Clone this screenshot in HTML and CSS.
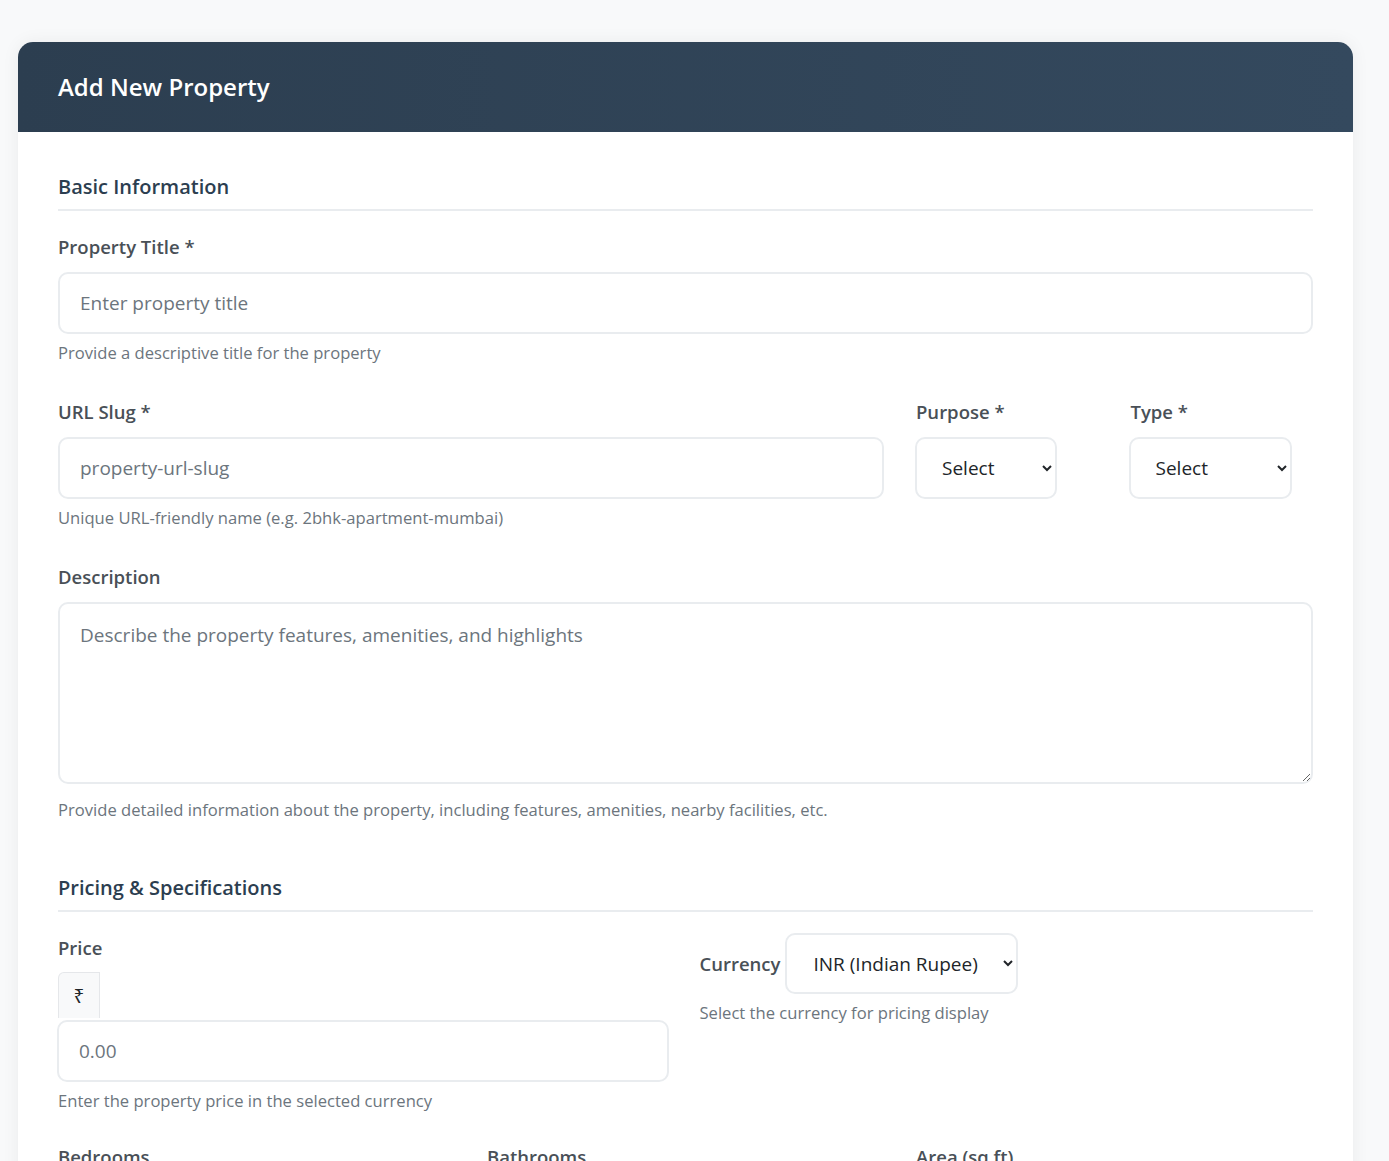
FILE: index.html
```html
<!DOCTYPE html>
<html lang="en">
<head>
<meta charset="utf-8">
<title>Add New Property</title>
<link rel="stylesheet" href="styles.css">
</head>
<body>
<div class="card">
  <div class="card-header">
    <h1 class="card-title">Add New Property</h1>
  </div>
  <form class="card-body">
    <section class="form-section">
      <h2 class="section-title">Basic Information</h2>
      <div class="field">
        <label class="form-label">Property Title *</label>
        <input class="form-control" type="text" placeholder="Enter property title">
        <div class="form-text">Provide a descriptive title for the property</div>
      </div>
      <div class="row row-slug">
        <div class="field">
          <label class="form-label">URL Slug *</label>
          <input class="form-control" type="text" placeholder="property-url-slug">
          <div class="form-text">Unique URL-friendly name (e.g. 2bhk-apartment-mumbai)</div>
        </div>
        <div class="field">
          <label class="form-label">Purpose *</label>
          <select class="form-select select-purpose"><option>Select</option></select>
        </div>
        <div class="field">
          <label class="form-label">Type *</label>
          <select class="form-select select-type"><option>Select</option></select>
        </div>
      </div>
      <div class="field">
        <label class="form-label">Description</label>
        <textarea class="form-control textarea" placeholder="Describe the property features, amenities, and highlights"></textarea>
        <div class="form-text form-text-wide">Provide detailed information about the property, including features, amenities, nearby facilities, etc.</div>
      </div>
    </section>

    <section class="form-section">
      <h2 class="section-title">Pricing &amp; Specifications</h2>
      <div class="row row-half">
        <div class="field">
          <label class="form-label">Price</label>
          <span class="input-group-text">₹</span>
          <input class="form-control price-input" type="text" placeholder="0.00">
          <div class="form-text">Enter the property price in the selected currency</div>
        </div>
        <div class="field field-currency">
          <div class="currency-line">
            <label class="form-label inline">Currency</label>
            <select class="form-select select-currency"><option>INR (Indian Rupee)</option></select>
          </div>
          <div class="form-text">Select the currency for pricing display</div>
        </div>
      </div>
      <div class="row row-third">
        <div class="field"><label class="form-label">Bedrooms</label></div>
        <div class="field"><label class="form-label">Bathrooms</label></div>
        <div class="field"><label class="form-label">Area (sq ft)</label></div>
      </div>
    </section>
  </form>
</div>
</body>
</html>
```

FILE: styles.css
```css
* { box-sizing: border-box; }

body {
  margin: 0;
  background: #f8f9fa;
  font-family: "Open Sans", "Noto Sans", "Liberation Sans", sans-serif;
  color: #212529;
}

.card {
  margin: 42px 0 0 18px;
  width: 1335px;
  background: #ffffff;
  border-radius: 15px 15px 0 0;
  box-shadow: 0 0 18px rgba(0, 0, 0, 0.06);
}

.card-header {
  height: 90px;
  display: flex;
  align-items: center;
  padding: 0 40px;
  border-radius: 15px 15px 0 0;
  background: linear-gradient(90deg, #2c3e50 0%, #34495e 100%);
}

.card-title {
  margin: 0;
  color: #ffffff;
  font-size: 24px;
  font-weight: 600;
  line-height: 32px;
}

.card-body {
  padding: 42px 40px 40px;
}

.form-section + .form-section {
  margin-top: 53px;
}

.section-title {
  margin: 0 0 22px;
  padding-bottom: 9px;
  border-bottom: 2px solid #e9ecef;
  color: #2c3e50;
  font-size: 20px;
  font-weight: 600;
  line-height: 26px;
}

.field {
  display: flex;
  flex-direction: column;
  align-items: flex-start;
  min-width: 0;
}

.form-section > .field,
.form-section > .row {
  margin-bottom: 33px;
}

.form-label {
  display: block;
  margin-bottom: 11px;
  color: #495057;
  font-size: 18.5px;
  font-weight: 600;
  line-height: 28px;
}

.form-label.inline {
  margin: 0 5px 0 0;
}

.form-control {
  width: 100%;
  height: 62px;
  padding: 0 20px;
  border: 2px solid #e9ecef;
  border-radius: 10px;
  background: #ffffff;
  font-family: inherit;
  font-size: 19px;
  color: #212529;
  outline: none;
}

.form-control::placeholder {
  color: #6c757d;
}

.textarea {
  height: 182px;
  padding: 17px 20px;
  resize: vertical;
  line-height: 28px;
}

.form-text {
  margin-top: 7px;
  color: #6c757d;
  font-size: 16.6px;
  font-weight: 400;
  line-height: 24px;
}

.form-text-wide {
  margin-top: 14px;
}

.form-select {
  height: 62px;
  padding: 0 8px 0 21px;
  border: 2px solid #e9ecef;
  border-radius: 10px;
  background-color: #ffffff;
  font-family: inherit;
  font-size: 19px;
  color: #212529;
  outline: none;
}

.select-purpose { width: 142px; margin-left: -1px; }
.select-type { width: 163px; margin-left: -2px; }
.select-currency { width: 233px; height: 61px; padding-left: 22px; }

.row {
  display: grid;
  column-gap: 32px;
}

.row-slug { grid-template-columns: 826fr 182.5fr 182.5fr; }
.row-half { grid-template-columns: 1fr 1fr; }
.row-third { grid-template-columns: 1fr 1fr 1fr; }

.form-section > .row-half { margin-bottom: 30px; }

.input-group-text {
  display: flex;
  align-items: center;
  justify-content: center;
  width: 42px;
  height: 46px;
  margin-top: -1px;
  border: 1px solid #e5e7ea;
  border-bottom: none;
  border-radius: 6px 0 0 0;
  background: #f8f9fa;
  color: #212529;
  font-size: 19px;
}

.price-input {
  margin-top: 2px;
  margin-left: -1px;
}

.field-currency {
  margin-left: -2px;
}

.currency-line {
  display: flex;
  align-items: center;
  margin-top: -1px;
}
```
